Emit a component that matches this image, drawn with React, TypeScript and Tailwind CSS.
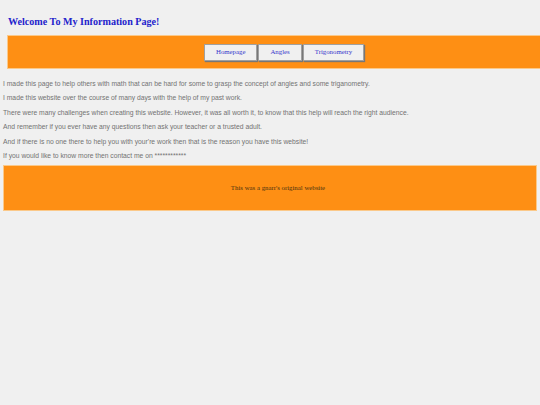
export default function App() {
  const lines = [
    "I made this page to help others with math that can be hard for some to grasp the concept of angles and some triganometry.",
    "I made this website over the course of many days with the help of my past work.",
    "There were many challenges when creating this website. However, it was all worth it, to know that this help will reach the right audience.",
    "And remember if you ever have any questions then ask your teacher or a trusted adult.",
    "And if there is no one there to help you with your're work then that is the reason you have this website!",
    "If you would like to know more then contact me on ************",
  ];
  const links = ["Homepage", "Angles", "Trigonometry"];

  return (
    <div className="min-h-[405px] w-[540px] overflow-hidden bg-[#f0f0f0] pt-[15px]">
      <h1 className="ml-[8px] h-[13px] font-['Liberation_Serif',serif] text-[10.1px] leading-[13px] font-bold text-[#2323cc]">
        Welcome To My Information Page!
      </h1>

      <nav className="mt-[7px] ml-[7px] flex h-[34px] w-[540px] items-center border border-[#fbc98a] bg-[#fe8f14] pl-[196px]">
        <div className="flex gap-[1px]">
          {links.map((l) => (
            <a
              key={l}
              href="#"
              className="flex h-[17px] items-center border border-[#a0a0a0] bg-[#f0f0f0] px-[11px] font-['Liberation_Serif',serif] text-[6.8px] text-[#3535cc] shadow-[1px_1px_1px_#777]"
            >
              {l}
            </a>
          ))}
        </div>
      </nav>

      <div className="mt-[8px] ml-[3px] font-['Liberation_Sans',Arial,sans-serif] text-[6.75px] text-[#727272]">
        {lines.map((t) => (
          <p key={t} className="leading-[14.4px] whitespace-nowrap">
            {t}
          </p>
        ))}
      </div>

      <footer className="mt-[2px] ml-[3px] flex h-[46px] w-[534px] items-center justify-center border border-[#fbc98a] bg-[#fe8f14] pl-[16px] font-['Liberation_Serif',serif] text-[6.8px] text-[#4a3210]">
        This was a gnarr's original website
      </footer>
    </div>
  );
}
